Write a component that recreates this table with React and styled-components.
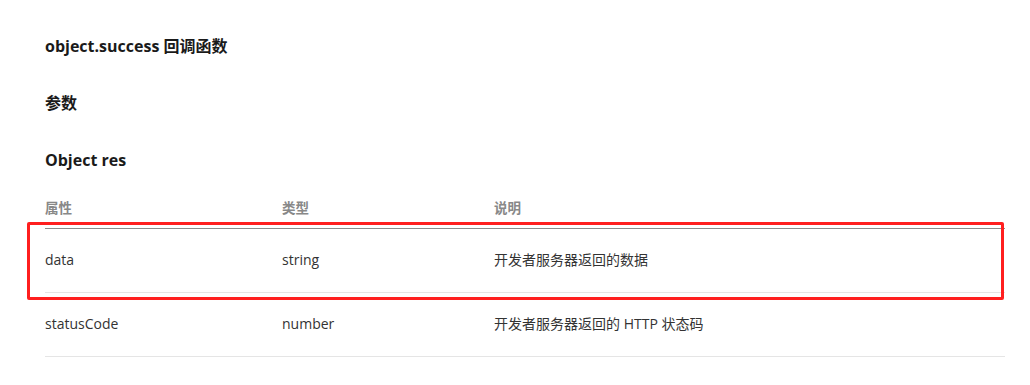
import React from "react";
import styled, { createGlobalStyle } from "styled-components";

const GlobalStyle = createGlobalStyle`
  body {
    margin: 0;
    background: #fff;
    font-family: "Segoe UI", "Open Sans", "Noto Sans CJK SC", sans-serif;
    color: #333;
  }
`;

const rows = [
  { name: "data", type: "string", desc: "开发者服务器返回的数据", marked: true },
  { name: "statusCode", type: "number", desc: "开发者服务器返回的 HTTP 状态码" },
];

export default function App() {
  return (
    <>
      <GlobalStyle />
      <Page>
        <Heading>object.success 回调函数</Heading>
        <Heading>参数</Heading>
        <Heading>Object res</Heading>
        <Table>
          <thead>
            <tr>
              <Th $w={237}>属性</Th>
              <Th $w={212}>类型</Th>
              <Th>说明</Th>
            </tr>
          </thead>
          <tbody>
            {rows.map((r) => (
              <Row key={r.name}>
                <Td>
                  {r.marked && <Marker />}
                  {r.name}
                </Td>
                <Td>{r.type}</Td>
                <Td>{r.desc}</Td>
              </Row>
            ))}
          </tbody>
        </Table>
      </Page>
    </>
  );
}

const Page = styled.div`
  padding: 34px 0 0 45px;
  width: 960px;
  display: flex;
  flex-direction: column;
  gap: 33px;
`;

const Heading = styled.h3`
  margin: 0;
  font-size: 16px;
  line-height: 24px;
  font-weight: 700;
  color: #1a1a1a;
`;

const Table = styled.table`
  margin-top: -18px;
  width: 960px;
  border-collapse: collapse;
  font-size: 14px;
`;

const Th = styled.th`
  width: ${(p) => (p.$w ? `${p.$w}px` : "auto")};
  text-align: left;
  padding: 11px 0 10px;
  line-height: 20px;
  font-size: 13.5px;
  font-weight: 700;
  color: #888;
  border-bottom: 1px solid #8c8c8c;
`;

const Row = styled.tr`
  border-bottom: 1px solid #e5e5e5;
`;

const Td = styled.td`
  position: relative;
  padding: 21px 0 22px;
  line-height: 20px;
  color: #333;
`;

const Marker = styled.span`
  position: absolute;
  left: -18px;
  top: -7px;
  width: 977px;
  height: 78px;
  box-sizing: border-box;
  border: 3px solid #ff1f1f;
  border-radius: 2px;
  pointer-events: none;
`;
